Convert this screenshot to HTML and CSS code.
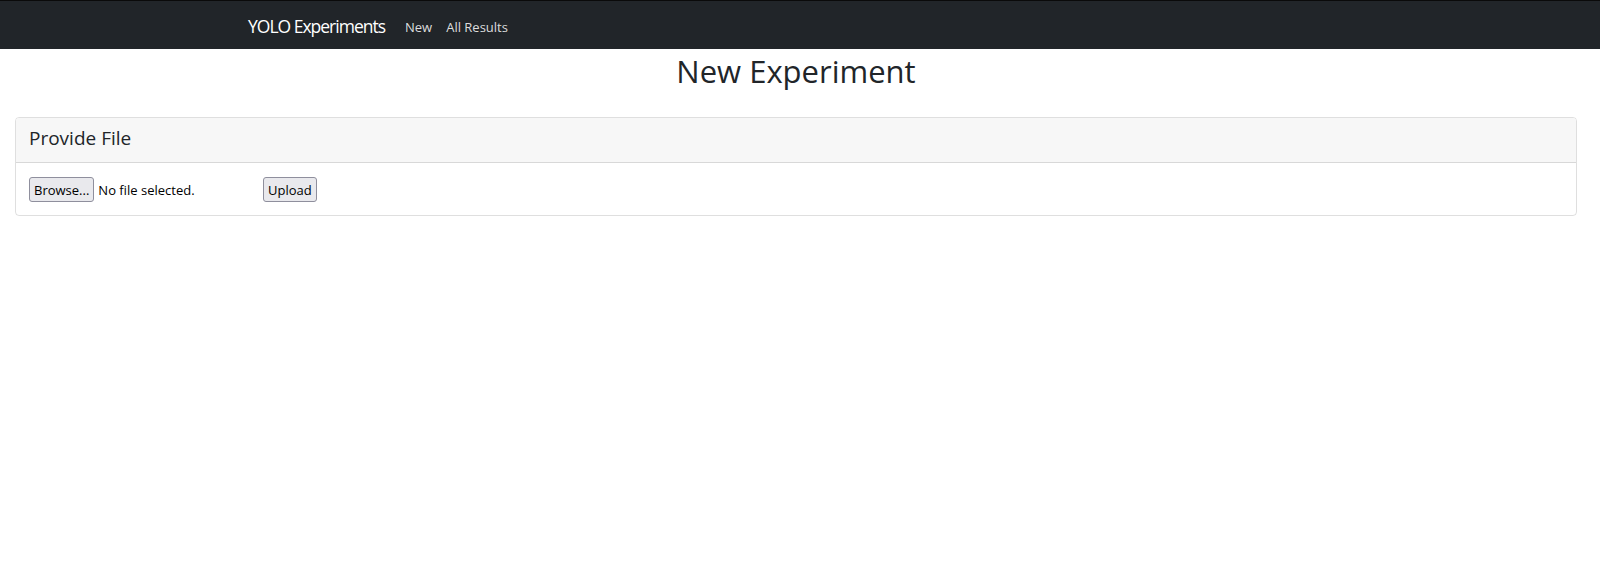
FILE: index.html
```html
<!DOCTYPE html>
<html>
<head>
<meta charset="utf-8">
<link rel="stylesheet" href="styles.css">
</head>
<body>
<nav class="navbar">
  <div class="nav-container">
    <a class="brand" href="#">YOLO Experiments</a>
    <a class="nav-link" href="#">New</a>
    <a class="nav-link" href="#">All Results</a>
  </div>
</nav>
<main class="main">
  <h2 class="title">New Experiment</h2>
  <div class="card">
    <div class="card-header">Provide File</div>
    <div class="card-body">
      <div class="file-input">
        <span class="btn">Browse...</span>
        <span class="file-label">No file selected.</span>
      </div>
      <span class="btn">Upload</span>
    </div>
  </div>
</main>
</body>
</html>
```
FILE: styles.css
```css
* { box-sizing: border-box; }
html, body { margin: 0; padding: 0; }
body {
  font-family: "Open Sans", "Noto Sans", sans-serif;
  color: #212529;
  background: #fff;
}
.navbar {
  background: #212529;
  border-top: 1px solid #0a0a0a;
  height: 49px;
  display: flex;
  align-items: center;
}
.nav-container {
  width: 1140px;
  margin: 0 auto;
  padding: 2px 15px 0 18px;
  display: flex;
  align-items: center;
}
.brand {
  color: #fff;
  text-decoration: none;
  font-size: 17.5px;
  margin-right: 13px;
  letter-spacing: -1px;
}
.nav-link {
  color: rgba(255,255,255,0.85);
  text-decoration: none;
  font-size: 13px;
  padding: 2px 7px 0;
}
.main {
  padding: 0 23px 0 15px;
}
.title {
  margin: 2px 0 0;
  text-align: center;
  font-weight: 400;
  font-size: 31px;
  line-height: 40px;
  height: 66px;
}
.card {
  border: 1px solid rgba(0,0,0,0.125);
  border-radius: 4px;
  overflow: hidden;
}
.card-header {
  background: #f7f7f7;
  border-bottom: 1px solid rgba(0,0,0,0.125);
  padding: 0 13px 4px;
  height: 45px;
  display: flex;
  align-items: center;
  font-size: 19px;
}
.card-body {
  padding: 14px 13px 13px;
  display: flex;
  align-items: center;
}
.file-input {
  display: flex;
  align-items: center;
  width: 234px;
}
.btn {
  display: inline-flex;
  align-items: center;
  height: 25px;
  padding: 0 4px;
  border: 1px solid #8f8f9d;
  border-radius: 3px;
  background: #e9e9ed;
  font-size: 13px;
  color: #000;
}
.file-label {
  font-size: 13px;
  margin-left: 4px;
  color: #000;
}
```
